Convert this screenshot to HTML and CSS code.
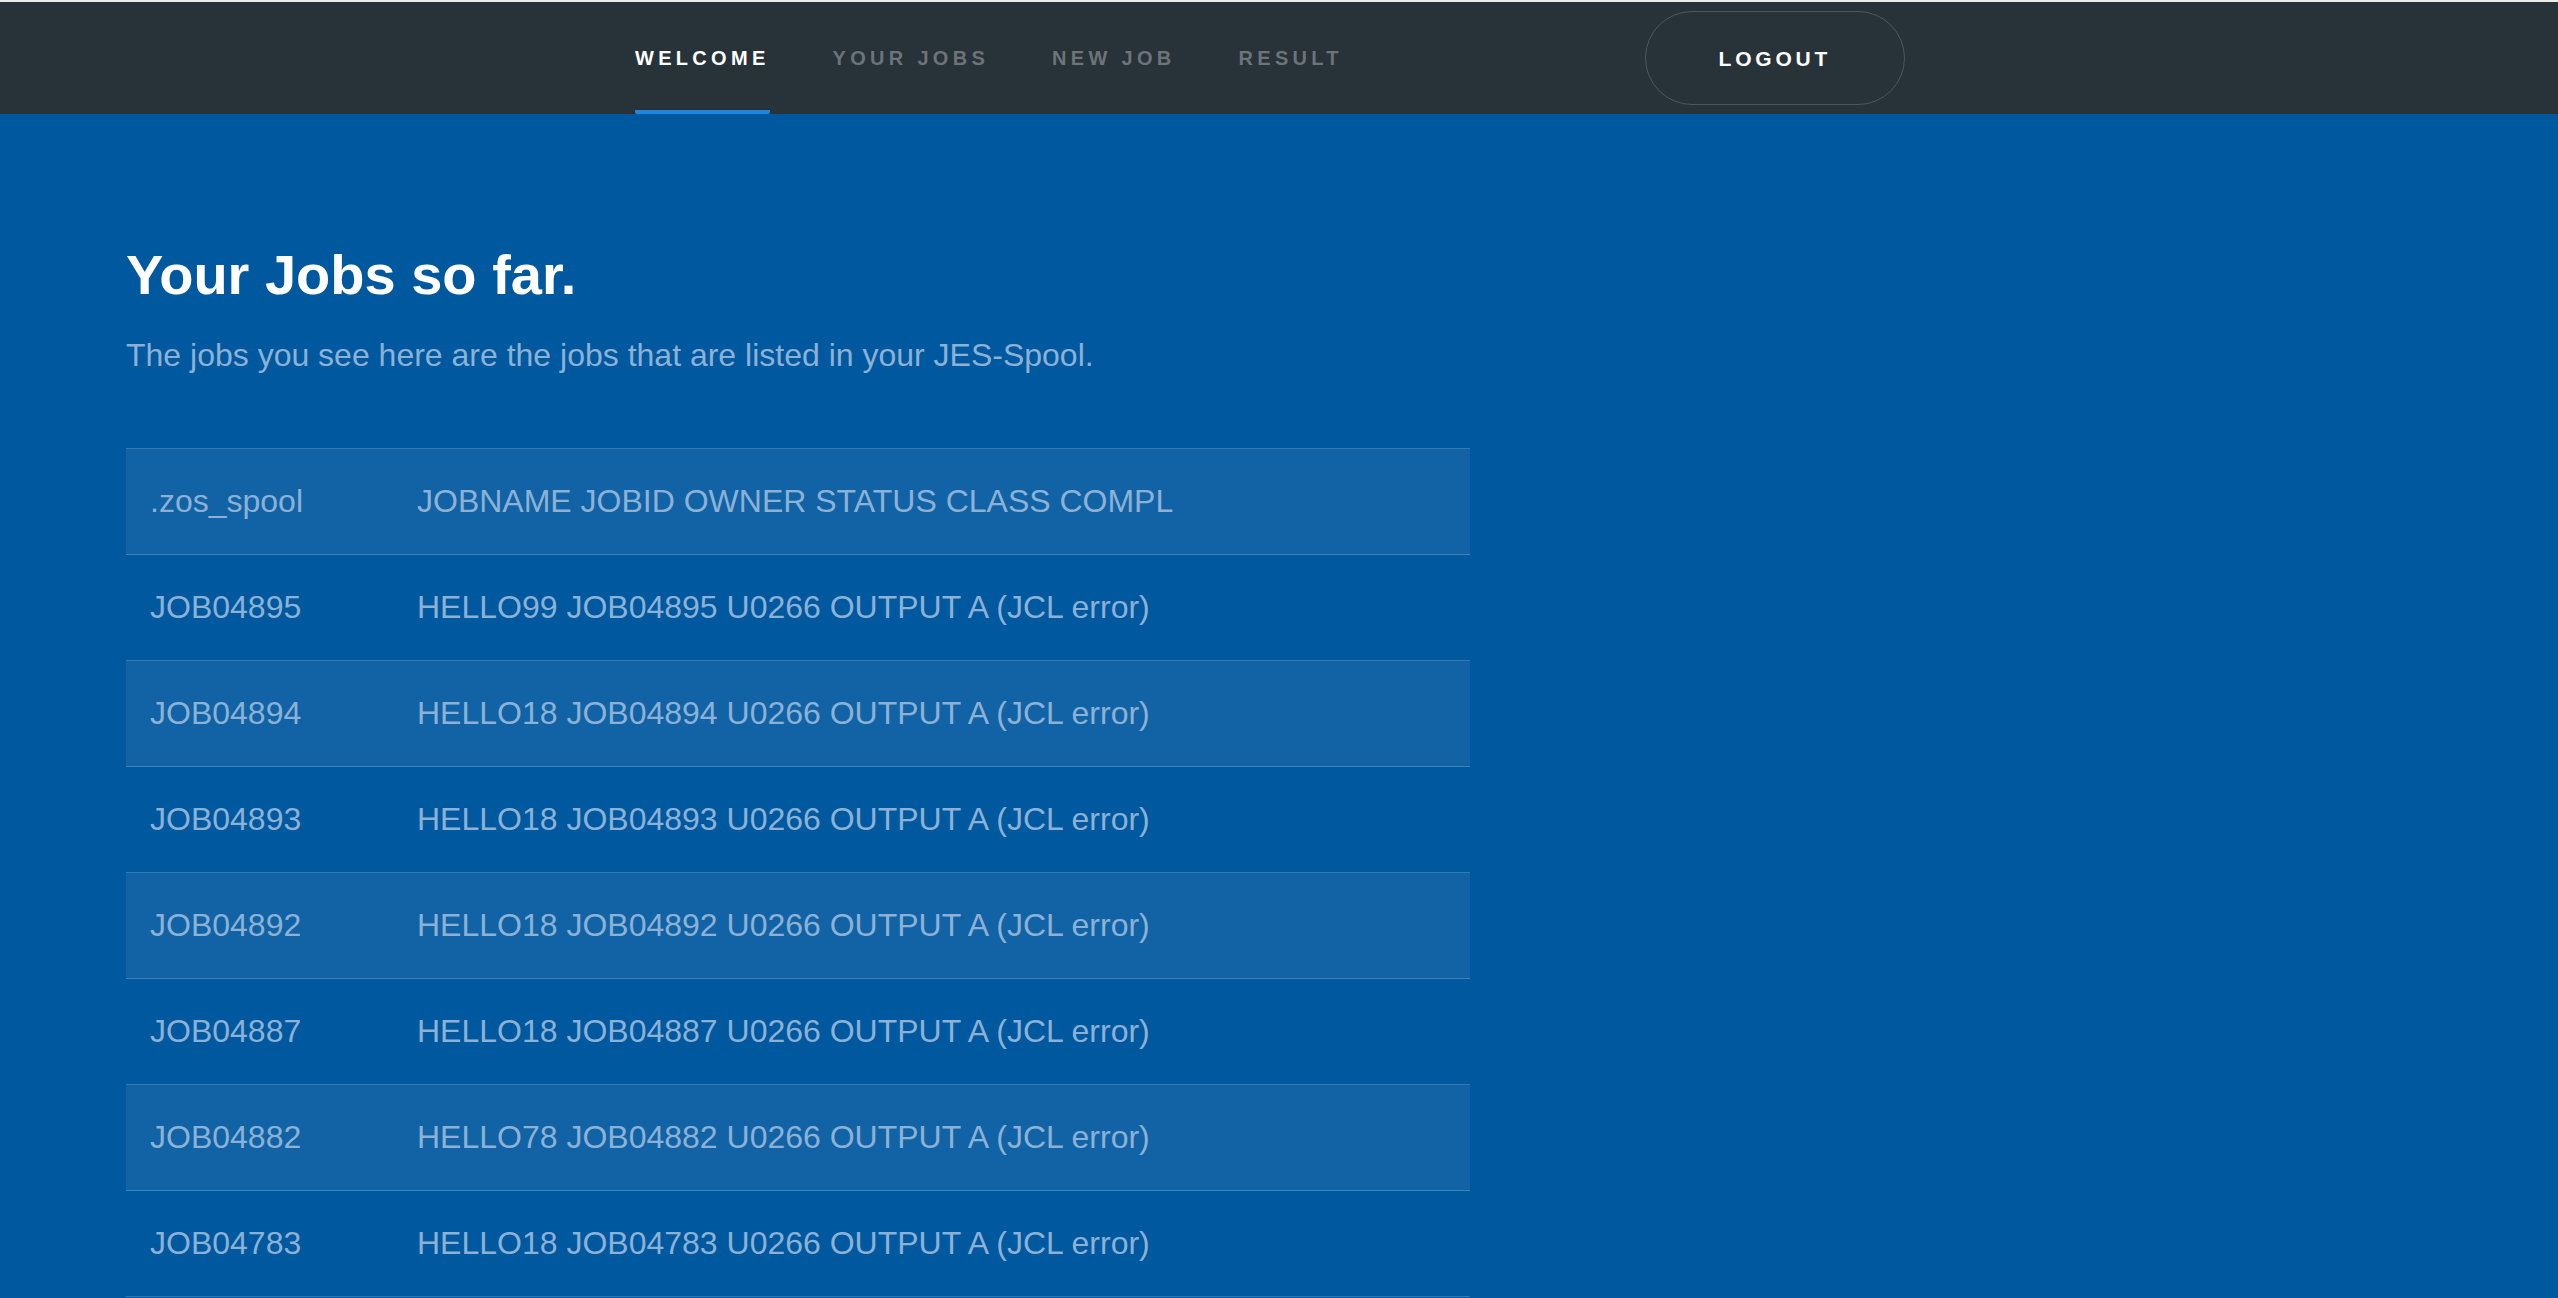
FILE: index.html
```html
<!DOCTYPE html>
<html lang="en">
<head>
<meta charset="utf-8">
<title>Your Jobs</title>
<link rel="stylesheet" href="styles.css">
</head>
<body>
<header class="topbar">
  <nav class="nav">
    <a class="nav-link active" href="#">WELCOME</a>
    <a class="nav-link" href="#">YOUR JOBS</a>
    <a class="nav-link" href="#">NEW JOB</a>
    <a class="nav-link" href="#">RESULT</a>
  </nav>
  <a class="logout" href="#">LOGOUT</a>
</header>
<main class="content">
  <h1 class="title">Your Jobs so far.</h1>
  <p class="lead">The jobs you see here are the jobs that are listed in your JES-Spool.</p>
  <table class="jobs">
    <colgroup><col class="col-id"><col class="col-info"></colgroup>
    <tbody>
      <tr><td>.zos_spool</td><td>JOBNAME JOBID OWNER STATUS CLASS COMPL</td></tr>
      <tr><td>JOB04895</td><td>HELLO99 JOB04895 U0266 OUTPUT A (JCL error)</td></tr>
      <tr><td>JOB04894</td><td>HELLO18 JOB04894 U0266 OUTPUT A (JCL error)</td></tr>
      <tr><td>JOB04893</td><td>HELLO18 JOB04893 U0266 OUTPUT A (JCL error)</td></tr>
      <tr><td>JOB04892</td><td>HELLO18 JOB04892 U0266 OUTPUT A (JCL error)</td></tr>
      <tr><td>JOB04887</td><td>HELLO18 JOB04887 U0266 OUTPUT A (JCL error)</td></tr>
      <tr><td>JOB04882</td><td>HELLO78 JOB04882 U0266 OUTPUT A (JCL error)</td></tr>
      <tr><td>JOB04783</td><td>HELLO18 JOB04783 U0266 OUTPUT A (JCL error)</td></tr>
    </tbody>
  </table>
</main>
</body>
</html>
```
FILE: styles.css
```css
* { box-sizing: border-box; }

html, body {
  margin: 0;
  padding: 0;
}

body {
  font-family: "Liberation Sans", Arial, Helvetica, sans-serif;
  background: #00589f;
  min-height: 1298px;
}

.topbar {
  display: flex;
  align-items: center;
  height: 114px;
  border-top: 2px solid #ececec;
  background: #283239;
  padding-left: 635px;
}

.nav {
  display: flex;
  align-self: stretch;
  gap: 63px;
}

.nav-link {
  display: flex;
  flex-direction: column;
  justify-content: flex-end;
  text-decoration: none;
  color: #6c7479;
  font-weight: 700;
  font-size: 20px;
  line-height: 1;
  letter-spacing: 4.3px;
}

.nav-link::before {
  content: "";
  flex: 1;
}

.nav-link::after {
  content: "";
  display: block;
  flex: 1;
}

.nav-link.active {
  color: #ffffff;
}

.nav-link.active::after {
  background: linear-gradient(to top, #1e86e2 0, #1e86e2 4px, transparent 4px);
  border-radius: 0 0 2px 2px;
}

.logout {
  margin-left: 302px;
  width: 260px;
  height: 94px;
  border: 1.5px solid #4c565c;
  border-radius: 47px;
  display: flex;
  align-items: center;
  justify-content: center;
  color: #ffffff;
  text-decoration: none;
  font-weight: 700;
  font-size: 21px;
  letter-spacing: 3.8px;
  padding-top: 2px;
}

.content {
  padding: 133px 0 0 126px;
}

.title {
  margin: 0;
  font-size: 56px;
  line-height: 1;
  font-weight: 700;
  color: #ffffff;
}

.lead {
  margin: 36px 0 0;
  font-size: 32px;
  line-height: 1;
  color: #8cb1d6;
}

.jobs {
  margin-top: 77px;
  width: 1344px;
  table-layout: fixed;
  border-collapse: collapse;
  font-size: 32px;
  color: #8cb1d6;
}

.col-id {
  width: 267px;
}

.jobs tr {
  height: 106px;
  border-top: 1px solid rgba(255, 255, 255, 0.2);
  border-bottom: 1px solid rgba(255, 255, 255, 0.2);
}

.jobs tr:nth-child(odd) {
  background: rgba(255, 255, 255, 0.065);
}

.jobs td {
  padding: 0 0 0 24px;
  vertical-align: middle;
  white-space: nowrap;
}
```
